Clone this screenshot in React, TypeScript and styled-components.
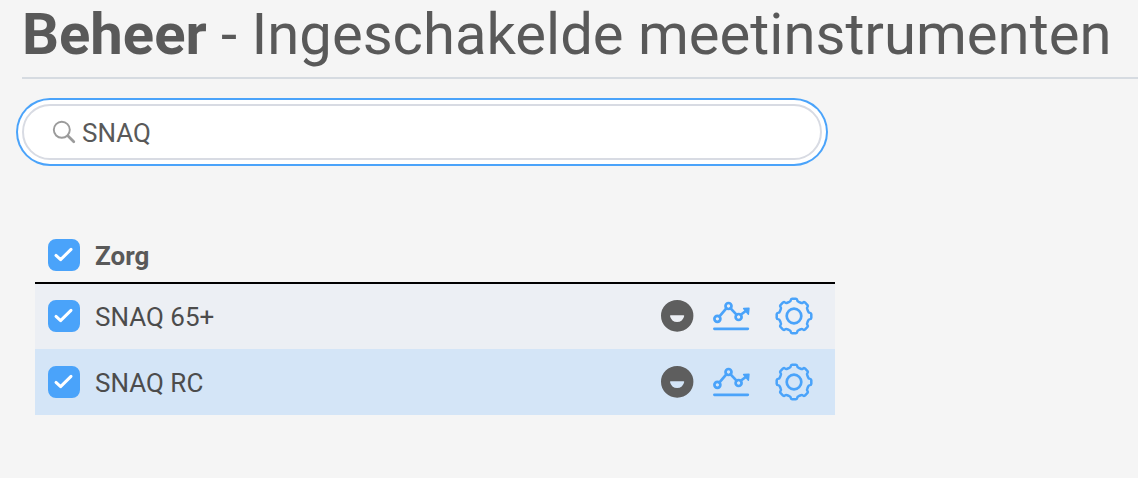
import React, { useState } from "react";
import styled, { createGlobalStyle } from "styled-components";

const blue = "#4aa3fa";

const GlobalStyle = createGlobalStyle`
  *, *::before, *::after { box-sizing: border-box; }
  body {
    margin: 0;
    background: #f5f5f5;
    color: #595959;
    font-family: Roboto, "Noto Sans", sans-serif;
    font-size: 26px;
    line-height: 32px;
  }
`;

const Page = styled.main`
  padding-left: 22px;
`;

const Title = styled.h1`
  margin: 0 0 25px;
  padding-bottom: 9px;
  border-bottom: 2px solid #d6dbe1;
  font-size: 58px;
  line-height: 68px;
  font-weight: 400;
  white-space: nowrap;
`;

const SearchBox = styled.label`
  display: flex;
  align-items: center;
  gap: 6px;
  width: calc(100% - 16px);
  max-width: 800px;
  height: 56px;
  padding: 0 28px;
  border: 2px solid #d8dbe3;
  border-radius: 28px;
  background: #fff;
  box-shadow: 0 0 0 4px #fff, 0 0 0 6px ${blue};
`;

const SearchInput = styled.input`
  flex: 1;
  min-width: 0;
  padding: 2px 0 0;
  border: 0;
  outline: 0;
  background: transparent;
  color: inherit;
  font: inherit;
`;

const List = styled.table`
  width: calc(100% - 26px);
  max-width: 800px;
  margin: 67px 13px 0;
  border-collapse: collapse;
`;

const HeadRow = styled.tr`
  height: 56px;
  border-bottom: 2px solid #000;
`;

const ItemRow = styled.tr<{ $selected?: boolean }>`
  height: 66px;
  background: ${(p) => (p.$selected ? "#d4e5f7" : "#eceff4")};
  color: #4c4c4c;
`;

const NameHead = styled.th`
  padding: 0 13px;
  text-align: left;
  font-weight: 700;
`;

const NameCell = styled.td`
  padding: 0 13px 1px;
`;

const ActionCell = styled.td`
  padding: 0 22px 1px 0;
`;

const CheckLabel = styled.label`
  display: flex;
  align-items: center;
  gap: 15px;
`;

const LabelText = styled.span`
  padding-top: 2px;
`;

const CheckWrap = styled.span`
  display: grid;
  width: 32px;
  height: 32px;

  > * {
    grid-area: 1 / 1;
  }
`;

const CheckInput = styled.input`
  appearance: none;
  width: 32px;
  height: 32px;
  margin: 0;
  border: 2px solid ${blue};
  border-radius: 8px;
  background: #fff;

  &:checked {
    background: ${blue};
  }

  &:not(:checked) + svg {
    visibility: hidden;
  }
`;

const Actions = styled.div`
  display: flex;
  align-items: center;
  justify-content: flex-end;
`;

const IconButton = styled.button<{ $gap?: number }>`
  display: flex;
  margin: 0 0 0 ${(p) => p.$gap ?? 0}px;
  padding: 0;
  border: 0;
  background: none;
  color: ${blue};
  cursor: pointer;
`;

const Graphic = styled.svg`
  display: block;
  fill: none;
  stroke: currentColor;
  stroke-linecap: round;
  stroke-linejoin: round;
  pointer-events: none;
`;

function SearchIcon() {
  return (
    <Graphic width="24" height="24" viewBox="0 0 24 24" color="#9b9b9b" aria-hidden="true">
      <circle cx="9.8" cy="9.8" r="8" strokeWidth="1.9" />
      <path d="M15.8 15.8 21.8 21.8" strokeWidth="2.7" />
    </Graphic>
  );
}

function SmileIcon() {
  return (
    <Graphic width="34" height="34" viewBox="0 0 34 34" aria-hidden="true">
      <path
        fill="#5e5e5e"
        fillRule="evenodd"
        stroke="none"
        d="M17.2.9a16.2 15.9 0 1 1 0 31.8a16.2 15.9 0 0 1 0-31.8ZM10.8 16.2a.8.8 0 0 0-.8.9a7.2 7.2 0 0 0 14.2 0a.8.8 0 0 0-.8-.9Z"
      />
    </Graphic>
  );
}

function TrendIcon() {
  return (
    <Graphic width="38" height="38" viewBox="0 0 38 38" strokeWidth="2.7" aria-hidden="true">
      <circle cx="5.4" cy="21.8" r="3" />
      <circle cx="16.5" cy="9" r="3" />
      <circle cx="26.6" cy="20" r="3" />
      <path d="M7.5 19.4 14.3 11.4M18.6 11.3 24.5 17.7M28.8 17.8 34 13.8" />
      <path d="M31.6 11.5 37 11.3 36.4 17.2Z" fill="currentColor" strokeWidth="1.4" />
      <path d="M2.4 31.8H35.8" />
    </Graphic>
  );
}

const point = (radius: number, degrees: number) => {
  const angle = (degrees * Math.PI) / 180;
  return `${(19 + radius * Math.sin(angle)).toFixed(2)} ${(19 - radius * Math.cos(angle)).toFixed(2)}`;
};

const gearOutline =
  Array.from({ length: 8 }, (_, tooth) => {
    const a = tooth * 45;
    return [
      `${tooth ? "L" : "M"}${point(16.4, a - 11)}`,
      `Q${point(17.4, a - 10)} ${point(17.4, a - 6)}`,
      `L${point(17.4, a + 6)}`,
      `Q${point(17.4, a + 10)} ${point(16.4, a + 11)}`,
      `Q${point(14.8, a + 13)} ${point(14.9, a + 18)}`,
      `L${point(14.9, a + 27)}`,
      `Q${point(14.8, a + 32)} ${point(16.4, a + 34)}`,
    ].join("");
  }).join("") + "Z";

function GearIcon() {
  return (
    <Graphic width="38" height="38" viewBox="0 0 38 38" strokeWidth="2.5" aria-hidden="true">
      <path d={gearOutline} />
      <circle cx="19" cy="19" r="7.3" strokeWidth="2.7" />
    </Graphic>
  );
}

function CheckField({ label }: { label: string }) {
  return (
    <CheckLabel>
      <CheckWrap>
        <CheckInput type="checkbox" defaultChecked />
        <Graphic width="32" height="32" viewBox="0 0 32 32" color="#fff" strokeWidth="3" aria-hidden="true">
          <path d="M8 16.4 12.6 20.6 23 10.4" />
        </Graphic>
      </CheckWrap>
      <LabelText>{label}</LabelText>
    </CheckLabel>
  );
}

const items = [
  { name: "SNAQ 65+", selected: false },
  { name: "SNAQ RC", selected: true },
];

export default function App() {
  const [query, setQuery] = useState("SNAQ");
  return (
    <>
      <GlobalStyle />
      <Page>
        <Title>
          <b>Beheer</b> - Ingeschakelde meetinstrumenten
        </Title>
        <SearchBox>
          <SearchIcon />
          <SearchInput
            type="text"
            aria-label="Zoeken"
            value={query}
            onChange={(e) => setQuery(e.target.value)}
          />
        </SearchBox>
        <List>
          <thead>
            <HeadRow>
              <NameHead colSpan={2}>
                <CheckField label="Zorg" />
              </NameHead>
            </HeadRow>
          </thead>
          <tbody>
            {items.map((item) => (
              <ItemRow key={item.name} $selected={item.selected}>
                <NameCell>
                  <CheckField label={item.name} />
                </NameCell>
                <ActionCell>
                  <Actions>
                    <IconButton type="button" aria-label="Weergave">
                      <SmileIcon />
                    </IconButton>
                    <IconButton type="button" aria-label="Grafiek" $gap={18}>
                      <TrendIcon />
                    </IconButton>
                    <IconButton type="button" aria-label="Instellingen" $gap={25}>
                      <GearIcon />
                    </IconButton>
                  </Actions>
                </ActionCell>
              </ItemRow>
            ))}
          </tbody>
        </List>
      </Page>
    </>
  );
}
